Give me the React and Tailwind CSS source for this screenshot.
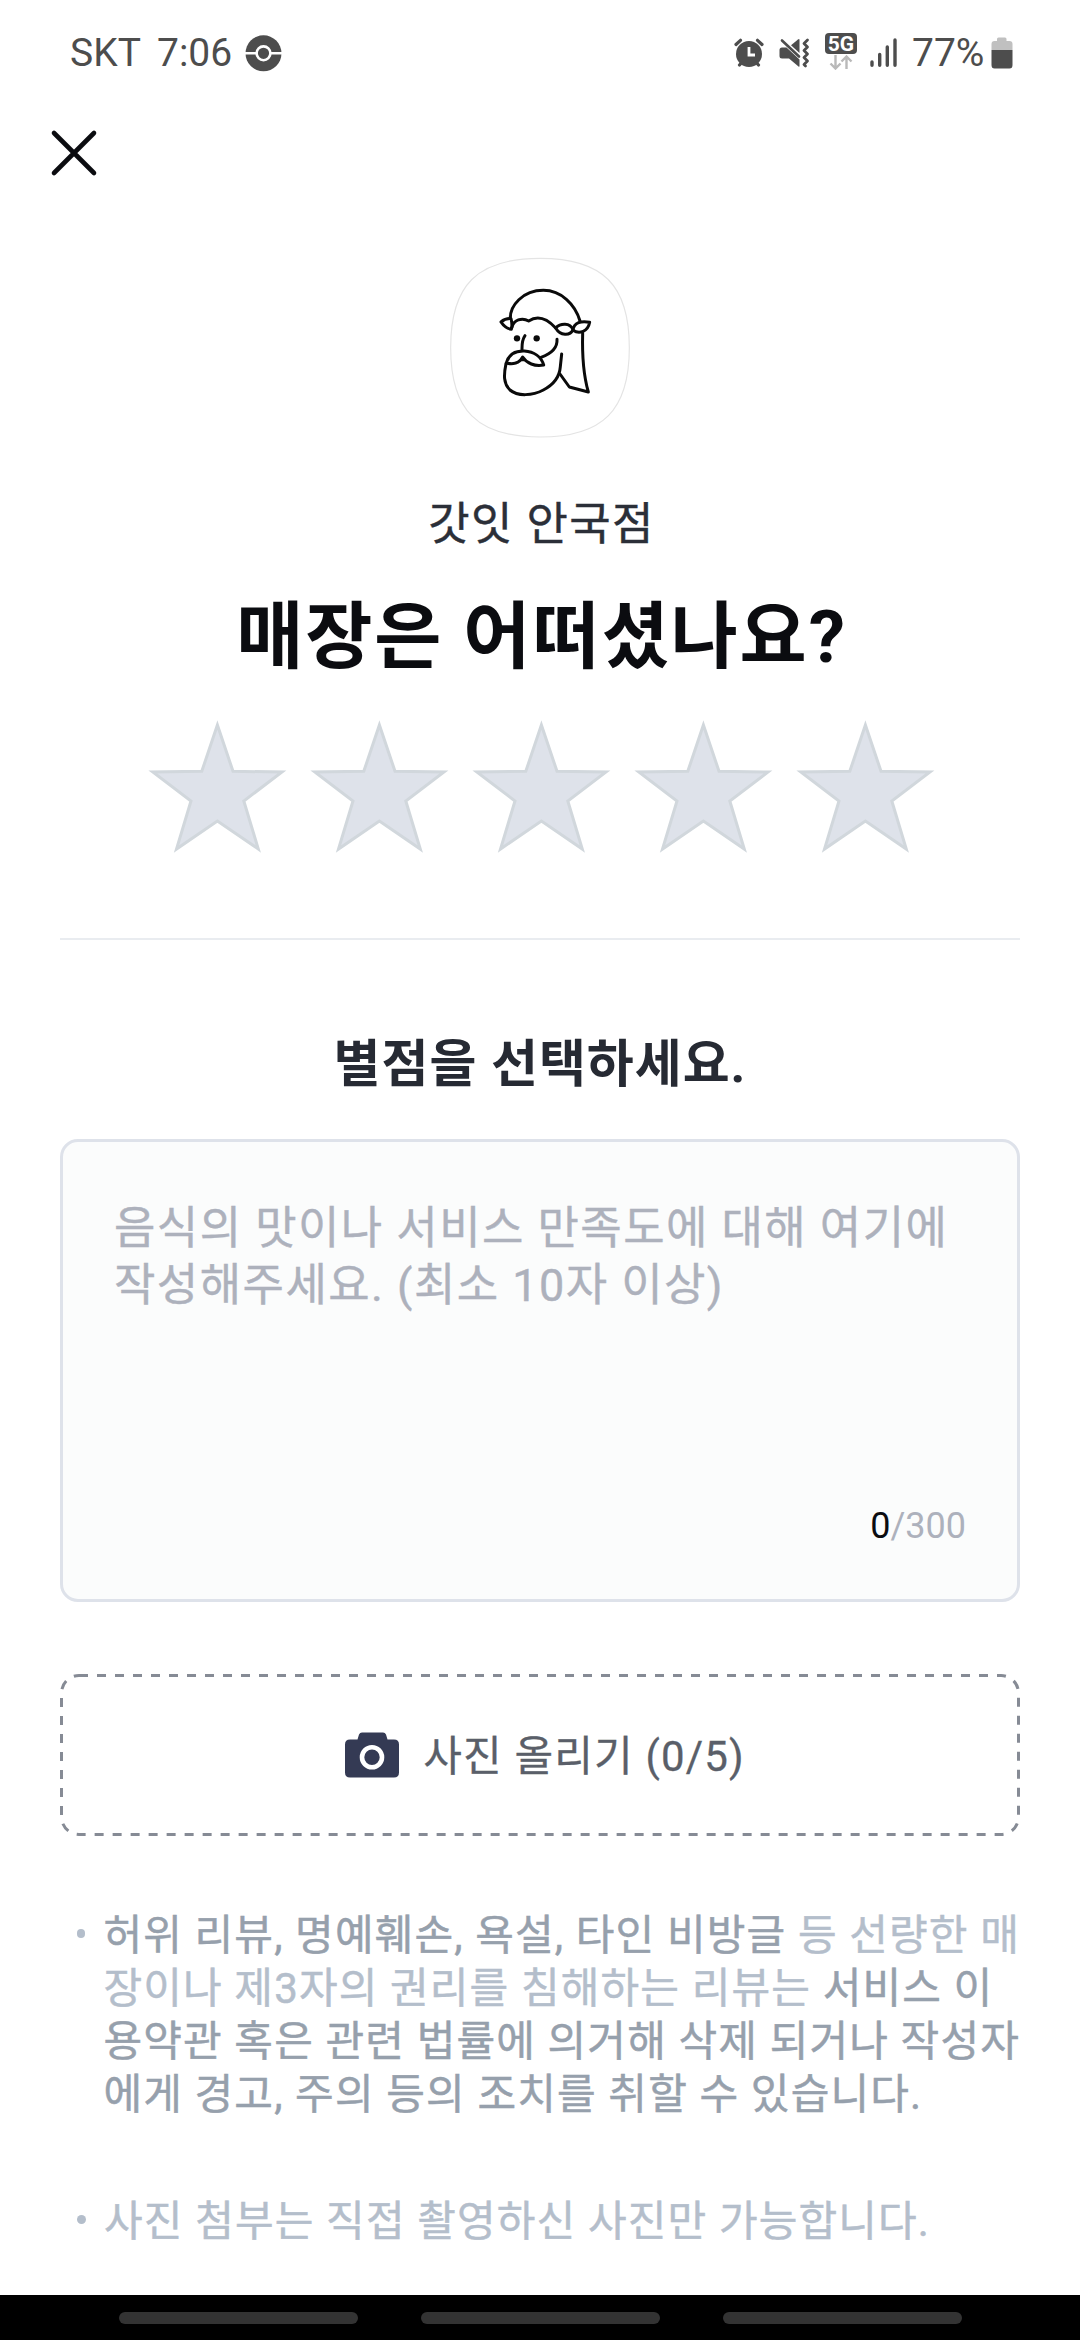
import React, { useState } from "react";

function StatusBar() {
  return (
    <div className="flex h-[106px] items-start pt-[33px] pl-[70px] pr-[67px] text-[39px] leading-[40px] text-[#4d4d4d]">
      <span className="w-[87px] whitespace-nowrap">SKT</span>
      <span className="w-[88px] whitespace-nowrap">7:06</span>
      <svg className="mt-[2px] h-[37px] w-[37px]" viewBox="0 0 37 37">
        <circle cx="18.5" cy="18.3" r="18" fill="#4d4d4d" />
        <path d="M0 18.3H37" stroke="#fff" strokeWidth="2.6" />
        <circle cx="18.5" cy="18.3" r="6.9" fill="#4d4d4d" stroke="#fff" strokeWidth="2.6" />
      </svg>

      <div className="ml-auto flex items-start">
        {/* alarm */}
        <svg className="mt-[5px] mr-[15px] h-[30px] w-[30px]" viewBox="0 0 30 30">
          <path d="M2 6.5L6.5 2.3M28 6.5L23.5 2.3M5.5 27L9 23M24.5 27L21 23" stroke="#4d4d4d" strokeWidth="3.2" strokeLinecap="round" />
          <circle cx="15" cy="16" r="13" fill="#4d4d4d" />
          <path d="M15 9V17H21" fill="none" stroke="#fff" strokeWidth="2.8" />
        </svg>
        {/* muted + vibrate */}
        <svg className="mt-[5px] mr-[15px] h-[30px] w-[31px]" viewBox="0 0 31 30">
          <path d="M0.5 12Q0.5 9.5 3 9.5H7.5L20.5 21.5V28Q20.5 29 19.5 28.4L10 20.5H3Q0.5 20.5 0.5 18Z" fill="#4d4d4d" />
          <path d="M12 7.3L19 1.4Q20.5 0.6 20.5 2V15Z" fill="#4d4d4d" />
          <path d="M3 2.5L20 18.5" stroke="#4d4d4d" strokeWidth="2.6" strokeLinecap="round" />
          <path d="M28.5 2L25 5.5L28.5 9L25 12.5L28.5 16L25 19.5L28.5 23L25 26.5L26.5 28" fill="none" stroke="#4d4d4d" strokeWidth="2.8" strokeLinecap="round" strokeLinejoin="round" />
        </svg>
        {/* network type */}
        <div className="mr-[13px] flex w-[32px] flex-col items-center">
          <span className="h-[21px] w-[32px] rounded-[4px] bg-[#4d4d4d] text-center text-[21px] font-bold leading-[22px] text-white">5G</span>
          <svg className="mt-[1px] h-[15px] w-[24px]" viewBox="0 0 24 15">
            <path d="M6.5 0V13M1.5 8.5L6.5 13.5L11.5 8.5M17.5 14V2M12.5 6.5L17.5 1.5L22.5 6.5" fill="none" stroke="#b9b9b9" strokeWidth="2.4" />
          </svg>
        </div>
        {/* signal */}
        <svg className="mt-[5px] mr-[14px] h-[30px] w-[28px]" viewBox="0 0 28 30">
          <path d="M2 24V27.3M9.7 16.5V27.3M17.3 9V27.3M25 2V27.3" stroke="#4d4d4d" strokeWidth="3.4" strokeLinecap="round" />
        </svg>
        <span className="w-[79px] whitespace-nowrap">77%</span>
        {/* battery */}
        <svg className="mt-[4px] h-[32px] w-[22px]" viewBox="0 0 22 32">
          <path d="M0.5 13V7Q0.5 4 3.5 4H6V2Q6 0.5 7.5 0.5H14Q15.5 0.5 15.5 2V4H18.5Q21.5 4 21.5 7V13Z" fill="#c0c0c0" />
          <path d="M0.5 13H21.5V28Q21.5 31.5 18.5 31.5H3.5Q0.5 31.5 0.5 28Z" fill="#4d4d4d" />
        </svg>
      </div>
    </div>
  );
}

function StoreLogo() {
  return (
    <svg className="h-[220px] w-[220px]" viewBox="0 0 660 660" fill="none" strokeLinecap="round" strokeLinejoin="round">
      <path d="M62 323C62 135 142 55 330 55S598 135 598 323S518 591 330 591S62 511 62 323Z" stroke="#e4e4e4" strokeWidth="3.5" />
      <g stroke="#0a0a0a" strokeWidth="9">
        <path d="M241 236C239 198 278 151 340 151C394 151 436 194 450 243" />
        <path d="M243 236C232 235 221 239 213 246C221 258 232 266 244 268C247 257 246 247 243 236Z" />
        <path d="M246 262C250 240 276 231 296 243C322 226 351 236 377 264" />
        <path d="M377 264C392 249 420 248 429 269C420 289 391 288 377 264Z" />
        <path d="M429 271C431 247 455 242 479 247C474 274 449 284 429 271Z" />
        <path d="M285 287C275 301 276 316 276 330" />
        <path d="M381 298C383 326 360 342 333 352" />
        <path d="M229 369C237 340 260 332 283 333C312 335 334 350 341 375C314 380 290 370 278 351C268 370 248 374 229 369Z" />
        <path d="M278 351L285 362L270 362Z" fill="#0a0a0a" strokeWidth="4" />
        <path d="M228 371C221 405 220 431 240 450C263 470 308 467 340 450C375 432 389 407 391 380L395 342" />
        <path d="M390 402L418 441L475 456C460 404 456 350 458 280" />
      </g>
      <circle cx="261" cy="295" r="9.5" fill="#0a0a0a" />
      <circle cx="320" cy="295" r="9.5" fill="#0a0a0a" />
    </svg>
  );
}

function Star({ filled, onClick }) {
  return (
    <button className="h-[132px] w-[137px]" onClick={onClick}>
      <svg className="h-[132px] w-[137px] overflow-visible" viewBox="0 0 137 132">
        <polygon
          points="68.4,4 84,50.3 133,51 94.8,80 109.3,128 68.4,100 27.5,128 42,80 3.8,51 52.8,50.3"
          fill={filled ? "#ffd43b" : "#dee2ea"}
          stroke={filled ? "#fcc419" : "#d1d7dc"}
          strokeWidth="3"
        />
      </svg>
    </button>
  );
}

function CameraIcon() {
  return (
    <svg className="h-[46px] w-[54px]" viewBox="0 0 54 46">
      <path d="M5 7.5H12.5L14 2.5Q14.8 0.5 17 0.5H38Q40.2 0.5 41 2.5L42.5 7.5H49Q54 7.5 54 12.5V40.5Q54 45.5 49 45.5H5Q0 45.5 0 40.5V12.5Q0 7.5 5 7.5Z" fill="#343a54" />
      <circle cx="27" cy="25.3" r="10" fill="#343a54" stroke="#fff" strokeWidth="4.6" />
    </svg>
  );
}

export function ReviewPage() {
  const [rating, setRating] = useState(0);

  return (
    <div className="flex h-[2340px] w-[1080px] flex-col overflow-hidden bg-white font-['Roboto','Noto_Sans_CJK_KR',sans-serif]">
      <StatusBar />

      <header className="h-[134px] pt-[22px] pl-[49px]">
        <button className="block h-[50px] w-[50px]">
          <svg className="h-[50px] w-[50px]" viewBox="0 0 50 50">
            <path d="M5 5L45 45M45 5L5 45" stroke="#0b0c10" strokeWidth="4.6" strokeLinecap="round" />
          </svg>
        </button>
      </header>

      <section className="flex h-[698px] flex-col items-center">
        <StoreLogo />
        <p className="mt-[35px] pl-[3px] text-[45px] leading-[60px] tracking-[1.4px] text-[#2b2f38] [-webkit-text-stroke:0.4px]">갓잇 안국점</p>
        <h1 className="mt-[37px] pl-[3px] text-[73px] font-bold leading-[90px] tracking-[1.9px] text-[#0b0c10]">매장은 어떠셨나요?</h1>
        <div className="mt-[39px] flex gap-[25px] pl-[3px]">
          {[1, 2, 3, 4, 5].map((n) => (
            <Star key={n} filled={n <= rating} onClick={() => setRating(n)} />
          ))}
        </div>
      </section>

      <main className="mx-[60px] flex flex-1 flex-col border-t-2 border-[#e9ecf0]">
        <h2 className="mt-[92px] text-center text-[51px] font-bold leading-[66px] tracking-[1px] text-[#262a33]">별점을 선택하세요.</h2>

        <div className="mt-[41px] flex h-[463px] flex-col justify-between rounded-[18px] border-3 border-[#dee2ea] bg-[#fbfcfc] pt-[58px] pr-[51px] pb-[49px] pl-[51px]">
          <p className="whitespace-nowrap text-[45px] leading-[57px] tracking-[1.45px] text-[#adb1bc] [-webkit-text-stroke:0.4px]">
            음식의 맛이나 서비스 만족도에 대해 여기에
            <br />
            작성해주세요. (최소 10자 이상)
          </p>
          <p className="text-right text-[36px] leading-[48px] text-[#adb1bc]">
            <span className="text-[#0b0c10]">0</span>/300
          </p>
        </div>

        <button className="relative mt-[72px] flex h-[162px] items-center justify-center pl-[10px]">
          <svg className="absolute inset-0 h-[162px] w-[960px]" viewBox="0 0 960 162">
            <rect x="1.5" y="1.5" width="957" height="159" rx="17.5" fill="none" stroke="#868b95" strokeWidth="3" strokeDasharray="9 9" />
          </svg>
          <CameraIcon />
          <span className="ml-[24px] pt-[4px] text-[42px] leading-[54px] tracking-[1.15px] text-[#5a5f69] [-webkit-text-stroke:0.3px]">사진 올리기 (0/5)</span>
        </button>

        <ul className="mt-[73px] text-[42px] leading-[53px] tracking-[1.15px] text-[#b4becb] [-webkit-text-stroke:0.5px]">
          <li className="flex">
            <span className="mt-[20px] ml-[17px] h-[9px] w-[9px] rounded-full bg-[#b4becb]" />
            <p className="ml-[18px] whitespace-nowrap">
              <span className="text-[#96a0ac]">허위 리뷰, 명예훼손, 욕설, 타인 비방글</span> 등 선량한 매
              <br />
              장이나 제3자의 권리를 침해하는 리뷰는 <span className="text-[#96a0ac]">서비스 이</span>
              <br />
              <span className="text-[#96a0ac]">용약관 혹은 관련 법률에 의거해 삭제 되거나 작성자</span>
              <br />
              <span className="text-[#96a0ac]">에게 경고, 주의 등의 조치를 취할 수 있습니다.</span>
            </p>
          </li>
          <li className="mt-[74px] flex">
            <span className="mt-[20px] ml-[17px] h-[9px] w-[9px] rounded-full bg-[#b4becb]" />
            <p className="ml-[18px] whitespace-nowrap">사진 첨부는 직접 촬영하신 사진만 가능합니다.</p>
          </li>
        </ul>
      </main>

      <nav className="flex h-[45px] justify-center gap-[63px] bg-black pt-[17px]">
        <span className="h-[12px] w-[239px] rounded-full bg-[#333333]" />
        <span className="h-[12px] w-[239px] rounded-full bg-[#333333]" />
        <span className="h-[12px] w-[239px] rounded-full bg-[#333333]" />
      </nav>
    </div>
  );
}

export default ReviewPage;
